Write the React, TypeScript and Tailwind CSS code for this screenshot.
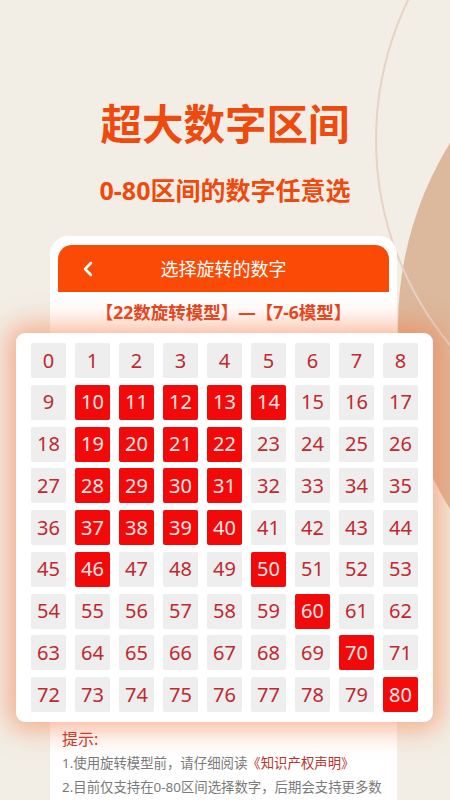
import React from "react";
import { ChevronLeft } from "lucide-react";

const selected = new Set([10, 11, 12, 13, 14, 19, 20, 21, 22, 28, 29, 30, 31, 37, 38, 39, 40, 46, 50, 60, 70, 80]);

export default function App() {
  const nums = Array.from({ length: 81 }, (_, i) => i);
  return (
    <div
      className="relative w-[450px] h-[800px] overflow-hidden bg-[#f2eee5]"
      style={{ fontFamily: '"Noto Sans", "Noto Sans CJK SC", sans-serif' }}
    >
      {/* background decorations */}
      <div className="absolute left-[398px] top-[-22px] w-[696px] h-[696px] rounded-full bg-[#dcb89c]" />
      <div className="absolute left-[375px] top-[-182px] w-[644px] h-[644px] rounded-full border-2 border-[#e8d2c6]" />

      <div className="relative flex flex-col items-center">
        <h1 className="mt-[104px] text-[41.5px] leading-[40px] font-bold text-[#ef4a0e]">
          超大数字区间
        </h1>
        <p className="mt-[34px] text-[25px] leading-[24px] font-bold text-[#ef4a0e]">
          0-80区间的数字任意选
        </p>

        <div className="mt-[34px] w-[347px] self-start ml-[50px] bg-white rounded-t-[18px] pt-[9px] flex flex-col">
          <div className="mx-[8px] h-[47px] rounded-t-[14px] bg-[#fb4a05] grid grid-cols-[60px_1fr_60px] items-center">
            <div className="pl-[18px] flex items-center">
              <ChevronLeft size={24} strokeWidth={2.6} color="#ffffff" />
            </div>
            <div className="text-center text-white text-[18px] leading-[24px]">选择旋转的数字</div>
            <div />
          </div>
          <div className="mt-[8px] text-center text-[17.5px] leading-[24px] font-bold text-[#e4421c]">
            【22数旋转模型】—【7-6模型】
          </div>

          <div className="mt-[9px] -ml-[34px] w-[417px] bg-white rounded-[9px] shadow-[0_0_26px_8px_rgba(246,120,70,0.55)] pt-[10px] pb-[10px] pl-[15px] pr-[15px]">
            <div className="grid grid-cols-[repeat(9,35px)] gap-x-[9px] gap-y-[6.75px]">
              {nums.map((n) => {
                const on = selected.has(n);
                return (
                  <div
                    key={n}
                    className={
                      on
                        ? "h-[35px] rounded-[2px] bg-[#f20a0a] text-[#ffe6e6] flex items-center justify-center text-[20px] leading-none"
                        : "h-[35px] rounded-[2px] bg-[#eeeeee] text-[#be2a30] flex items-center justify-center text-[20px] leading-none"
                    }
                  >
                    {n}
                  </div>
                );
              })}
            </div>
          </div>

          <div className="mt-[5px] pl-[12px] pr-[10px] pb-[20px]">
            <div className="text-[16px] leading-[24px] text-[#c93a2c]">提示:</div>
            <div className="text-[13.4px] leading-[24px] text-[#7a7a7a]">
              1.使用旋转模型前，请仔细阅读<span className="text-[#b8342c]">《知识产权声明》</span>
            </div>
            <div className="text-[13.4px] leading-[24px] text-[#7a7a7a]">
              2.目前仅支持在0-80区间选择数字，后期会支持更多数字，敬请期待
            </div>
          </div>
        </div>
      </div>
    </div>
  );
}
